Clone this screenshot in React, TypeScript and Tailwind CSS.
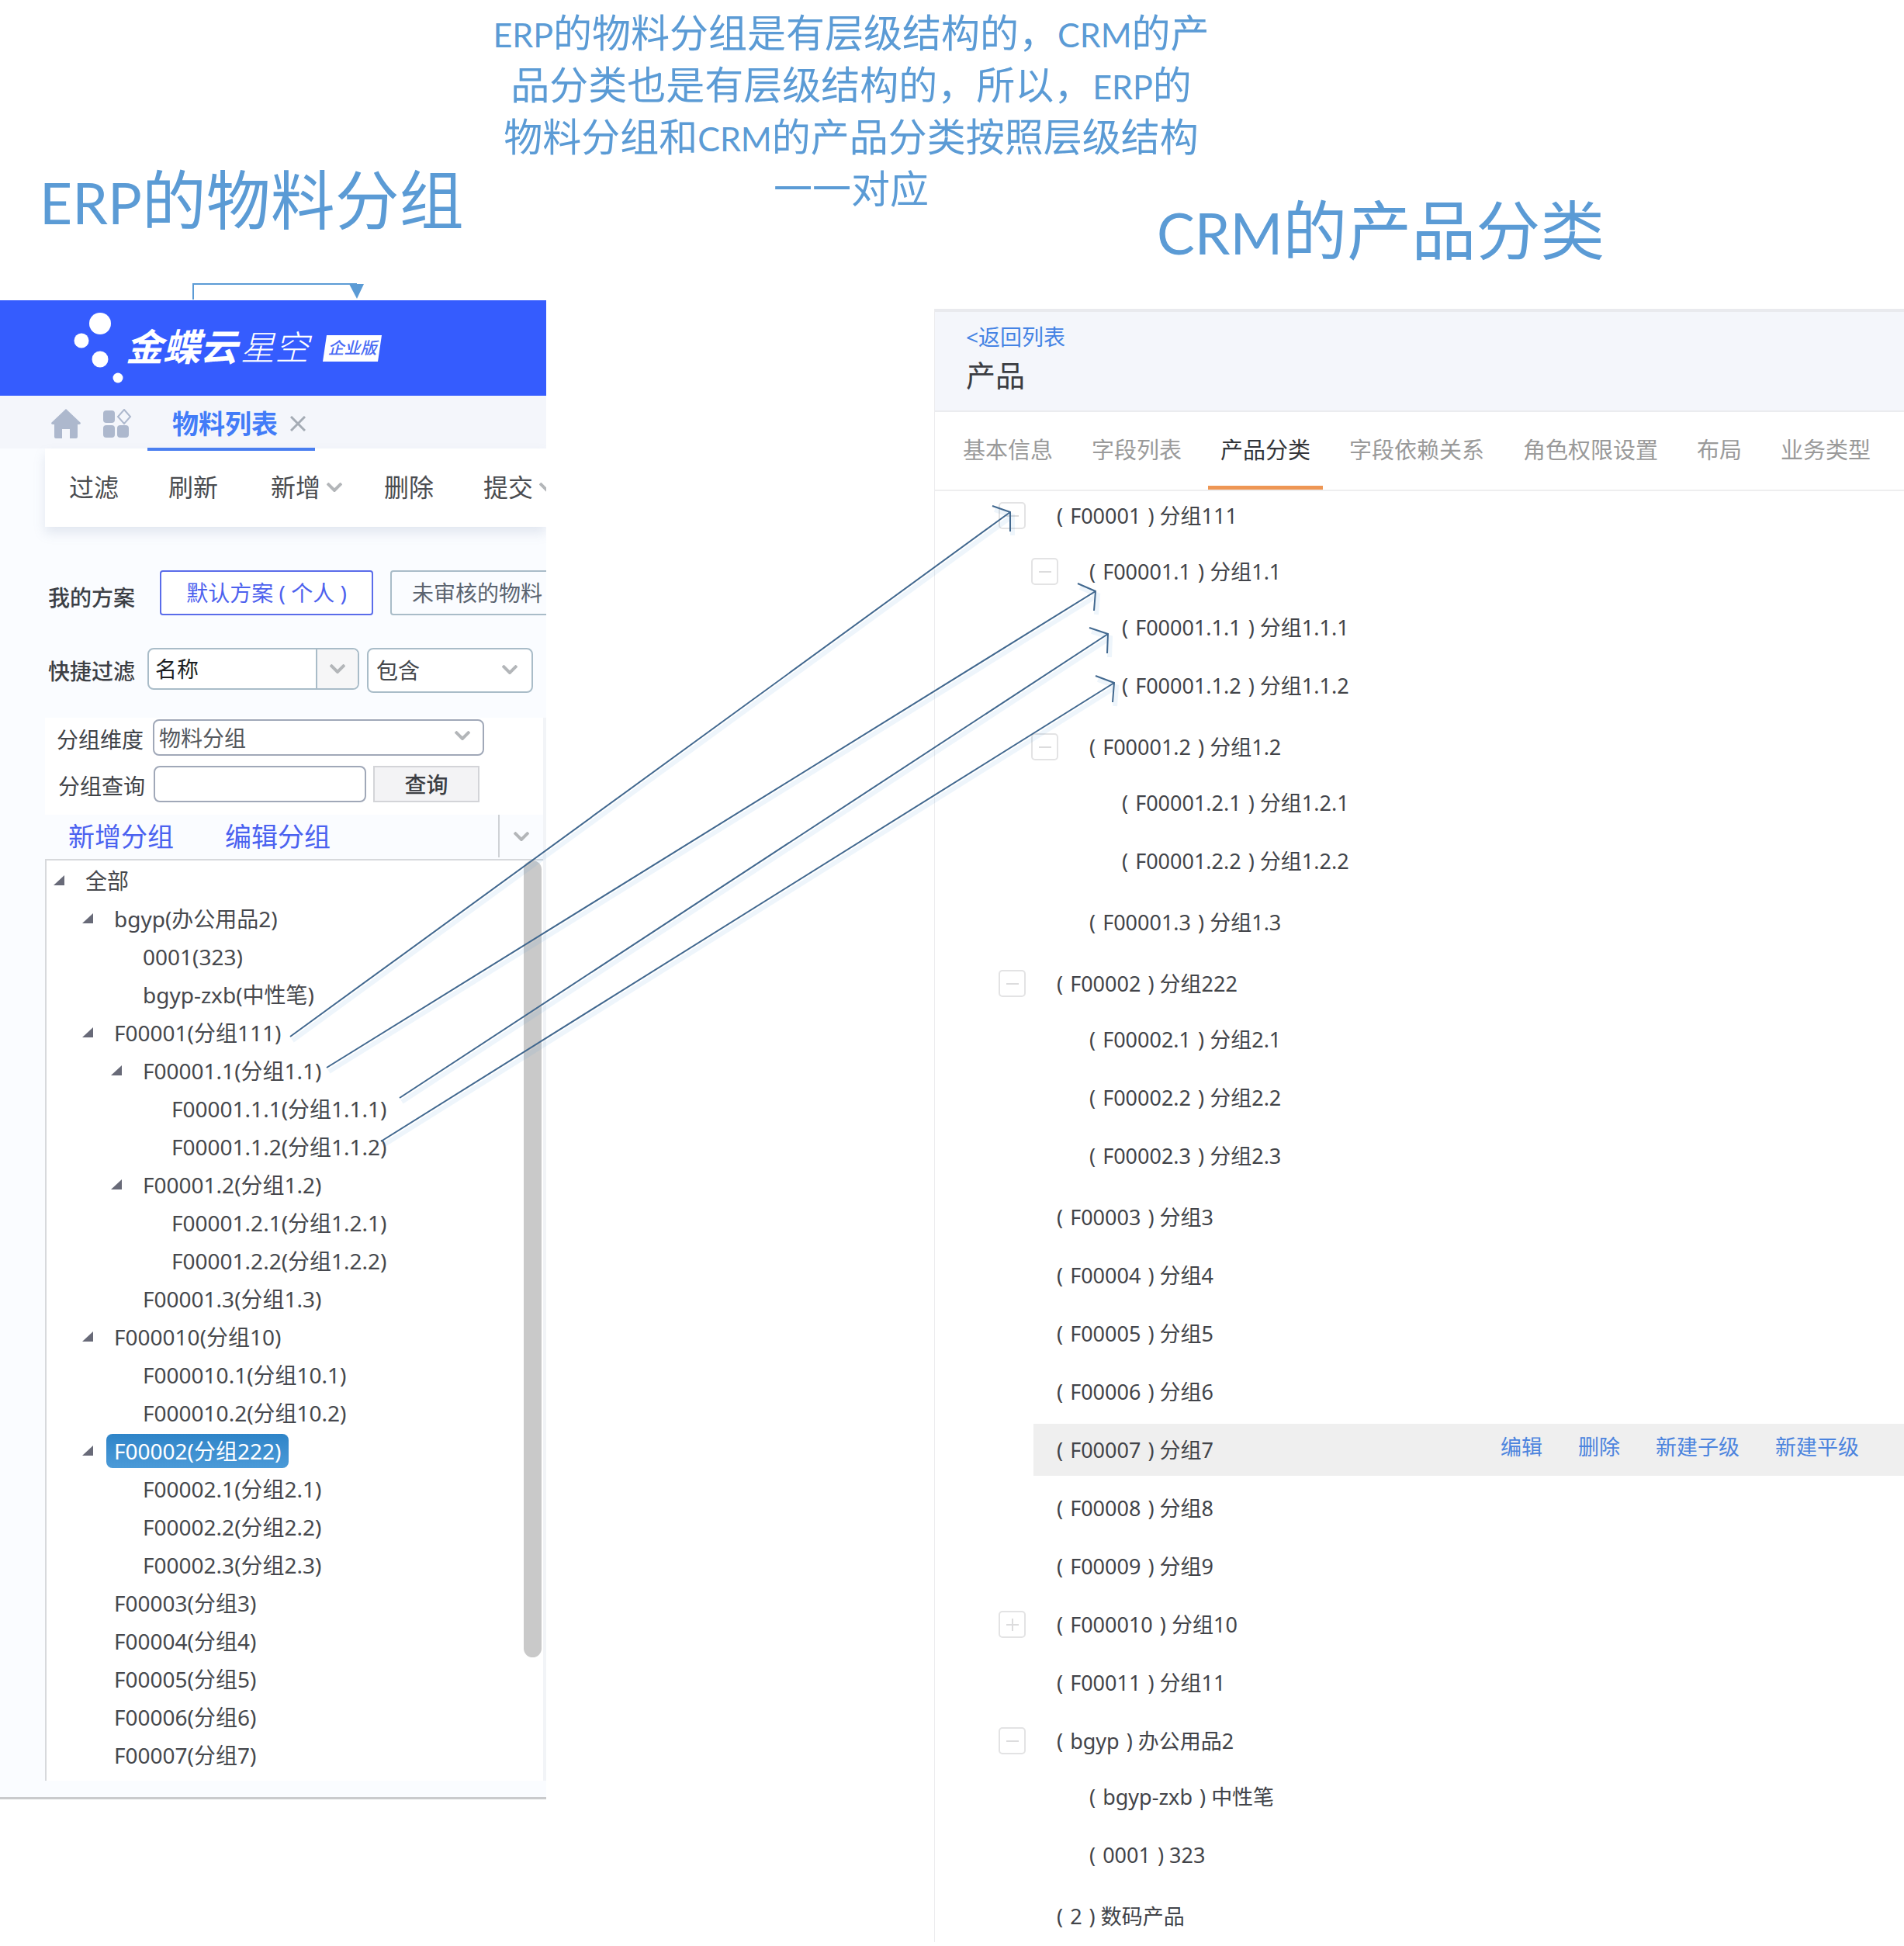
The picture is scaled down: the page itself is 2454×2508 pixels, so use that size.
import type { ReactNode } from "react";
import { clsx } from "clsx";

type ErpItem = { label: string; level: number; open?: boolean; selected?: boolean };

type CrmNode = {
  code: string;
  name: string;
  collapsed?: boolean;
  active?: boolean;
  children?: CrmNode[];
};

const erpItems: ErpItem[] = [
  { label: "全部", level: 0, open: true },
  { label: "bgyp(办公用品2)", level: 1, open: true },
  { label: "0001(323)", level: 2 },
  { label: "bgyp-zxb(中性笔)", level: 2 },
  { label: "F00001(分组111)", level: 1, open: true },
  { label: "F00001.1(分组1.1)", level: 2, open: true },
  { label: "F00001.1.1(分组1.1.1)", level: 3 },
  { label: "F00001.1.2(分组1.1.2)", level: 3 },
  { label: "F00001.2(分组1.2)", level: 2, open: true },
  { label: "F00001.2.1(分组1.2.1)", level: 3 },
  { label: "F00001.2.2(分组1.2.2)", level: 3 },
  { label: "F00001.3(分组1.3)", level: 2 },
  { label: "F000010(分组10)", level: 1, open: true },
  { label: "F000010.1(分组10.1)", level: 2 },
  { label: "F000010.2(分组10.2)", level: 2 },
  { label: "F00002(分组222)", level: 1, open: true, selected: true },
  { label: "F00002.1(分组2.1)", level: 2 },
  { label: "F00002.2(分组2.2)", level: 2 },
  { label: "F00002.3(分组2.3)", level: 2 },
  { label: "F00003(分组3)", level: 1 },
  { label: "F00004(分组4)", level: 1 },
  { label: "F00005(分组5)", level: 1 },
  { label: "F00006(分组6)", level: 1 },
  { label: "F00007(分组7)", level: 1 },
];

const crmNodes: CrmNode[] = [
  {
    code: "F00001",
    name: "分组111",
    children: [
      {
        code: "F00001.1",
        name: "分组1.1",
        children: [
          { code: "F00001.1.1", name: "分组1.1.1" },
          { code: "F00001.1.2", name: "分组1.1.2" },
        ],
      },
      {
        code: "F00001.2",
        name: "分组1.2",
        children: [
          { code: "F00001.2.1", name: "分组1.2.1" },
          { code: "F00001.2.2", name: "分组1.2.2" },
        ],
      },
      { code: "F00001.3", name: "分组1.3" },
    ],
  },
  {
    code: "F00002",
    name: "分组222",
    children: [
      { code: "F00002.1", name: "分组2.1" },
      { code: "F00002.2", name: "分组2.2" },
      { code: "F00002.3", name: "分组2.3" },
    ],
  },
  { code: "F00003", name: "分组3" },
  { code: "F00004", name: "分组4" },
  { code: "F00005", name: "分组5" },
  { code: "F00006", name: "分组6" },
  { code: "F00007", name: "分组7", active: true },
  { code: "F00008", name: "分组8" },
  { code: "F00009", name: "分组9" },
  { code: "F000010", name: "分组10", collapsed: true },
  { code: "F00011", name: "分组11" },
  {
    code: "bgyp",
    name: "办公用品2",
    children: [
      { code: "bgyp-zxb", name: "中性笔" },
      { code: "0001", name: "323" },
    ],
  },
  { code: "2", name: "数码产品" },
];

const crmTabs = [
  "基本信息",
  "字段列表",
  "产品分类",
  "字段依赖关系",
  "角色权限设置",
  "布局",
  "业务类型",
];

const levelPadding = ["pl-[9px]", "pl-[46px]", "pl-[83px]", "pl-[120px]"];

// line + open arrow head, ERP node -> CRM node
const arrows = [
  "M374 1336 L1302 660 M1279 652 L1302 660 L1302 685",
  "M421 1376 L1412 762 M1389 752 L1412 762 L1410 787",
  "M515 1415 L1428 817 M1404 809 L1428 817 L1427 842",
  "M491 1471 L1436 880 M1412 871 L1436 880 L1434 905",
];

function Chevron({ className }: { className?: string }) {
  return (
    <svg
      viewBox="0 0 20 12"
      className={clsx("h-3 w-5 shrink-0 text-[#b3b6b9]", className)}
      fill="none"
      stroke="currentColor"
      strokeWidth="4"
      aria-hidden="true"
    >
      <path d="M1 1 L10 10 L19 1" />
    </svg>
  );
}

function Latin({ children }: { children: ReactNode }) {
  return <span className="font-['Lato',sans-serif] text-[43px] leading-none">{children}</span>;
}

function LatinLg({ children }: { children: ReactNode }) {
  return <span className="font-['Lato',sans-serif] text-[73px] leading-none">{children}</span>;
}

function ErpHeader() {
  return (
    <header className="flex h-[123px] items-center bg-[#355cfe] pl-[94px] text-white">
      <svg viewBox="0 0 68 100" className="h-[100px] w-[68px]" fill="currentColor" aria-hidden="true">
        <circle cx="35" cy="18" r="14" />
        <circle cx="11" cy="40" r="9.5" />
        <circle cx="35" cy="64" r="10.5" />
        <circle cx="58" cy="88" r="6.5" />
      </svg>
      <span className="pb-1 text-[48px] leading-none font-bold italic">金蝶云</span>
      <span className="ml-1 pb-1 text-[44px] leading-none font-light italic">星空</span>
      <span className="relative ml-[18px] flex h-[34px] w-[76px] items-center justify-center">
        <svg viewBox="0 0 76 34" className="absolute inset-0 h-full w-full" aria-hidden="true">
          <path d="M5 0 H76 L71 34 H0 Z" fill="#fff" />
        </svg>
        <span className="relative text-[21px] leading-none font-medium text-[#4a6bf5] italic">
          企业版
        </span>
      </span>
    </header>
  );
}

function ErpTabs() {
  return (
    <nav className="flex h-[68px] items-stretch bg-[#f4f6fb] pl-[66px] text-[#adb8cd]">
      <a href="#home" aria-label="首页" className="flex items-center pt-1">
        <svg viewBox="0 0 38 38" className="h-[38px] w-[38px]" fill="currentColor">
          <path d="M19 0 L38 18 Q38 20 36 20 H34 V36 Q34 38 32 38 H24 V26 H14 V38 H6 Q4 38 4 36 V20 H2 Q0 20 0 18 Z" />
        </svg>
      </a>
      <a href="#apps" aria-label="应用" className="ml-[28px] flex items-center pt-1">
        <svg viewBox="0 0 38 38" className="h-[38px] w-[38px]" fill="currentColor">
          <rect x="1" y="2" width="15" height="16" rx="4" />
          <rect x="1" y="21" width="15" height="16" rx="4" />
          <rect x="19" y="21" width="15" height="16" rx="4" />
          <path d="M28 1 L36 10 L28 19 L20 10 Z" fill="none" stroke="currentColor" strokeWidth="2" />
        </svg>
      </a>
      <div className="relative ml-5 flex w-[216px] items-center pt-1 pl-8">
        <a href="#material" className="text-[34px] leading-none font-bold text-[#427cf8]">
          物料列表
        </a>
        <button type="button" aria-label="关闭" className="ml-4">
          <svg viewBox="0 0 20 20" className="h-5 w-5" fill="none" stroke="#a5acb5" strokeWidth="3">
            <path d="M1 1 L19 19 M19 1 L1 19" />
          </svg>
        </button>
        <span className="absolute inset-x-0 -bottom-[3px] z-10 h-1 bg-[#4a7ff0]" />
      </div>
    </nav>
  );
}

function ErpToolbar() {
  return (
    <div className="ml-[58px] flex h-[101px] items-center bg-white pb-[2px] pl-[31px] text-[32px] leading-none whitespace-nowrap text-[#4a4c50] shadow-[0_8px_14px_rgba(120,140,170,0.18)]">
      <button type="button">过滤</button>
      <button type="button" className="ml-16">刷新</button>
      <span className="ml-[34px] h-[30px] w-px bg-[#8f9296]" />
      <button type="button" className="ml-[34px] flex items-center gap-2">
        新增
        <Chevron />
      </button>
      <button type="button" className="ml-[54px]">删除</button>
      <button type="button" className="ml-16 flex items-center gap-2">
        提交
        <Chevron />
      </button>
    </div>
  );
}

function ErpFilters() {
  return (
    <div className="pt-14 pl-[62px] text-[28px] leading-none whitespace-nowrap">
      <div className="flex h-[58px] items-center">
        <span className="w-36 shrink-0 pt-3 font-medium text-[#3c3f45]">我的方案</span>
        <button
          type="button"
          className="h-full w-[275px] shrink-0 rounded-[4px] border-2 border-[#5a6cea] bg-white text-[#4d61ee]"
        >
          默认方案 ( 个人 )
        </button>
        <button
          type="button"
          className="ml-[22px] h-full w-[280px] shrink-0 rounded-[4px] border-2 border-[#a9bcc8] pl-[26px] text-left text-[#5b6470]"
        >
          未审核的物料
        </button>
      </div>
      <div className="mt-[42px] flex h-[58px] items-start">
        <label htmlFor="quick-field" className="w-32 pt-4 font-medium text-[#3c3f45]">
          快捷过滤
        </label>
        <div className="relative">
          <select
            id="quick-field"
            className="h-[54px] w-[273px] appearance-none rounded-lg border-2 border-[#a9bcc8] bg-white pl-2 text-[#1d1f22]"
          >
            <option>名称</option>
          </select>
          <span className="pointer-events-none absolute inset-y-[2px] right-[2px] flex w-[54px] items-center justify-center rounded-r-md border-l-2 border-[#a9bcc8] bg-[#f6f6f7]">
            <Chevron />
          </span>
        </div>
        <div className="relative ml-[10px]">
          <select
            aria-label="条件"
            className="h-[58px] w-[214px] appearance-none rounded-lg border-2 border-[#a9bcc8] bg-white pl-[10px] text-[#45484d]"
          >
            <option>包含</option>
          </select>
          <Chevron className="pointer-events-none absolute top-[22px] right-5" />
        </div>
      </div>
    </div>
  );
}

function ErpTree() {
  return (
    <div className="relative border-t-2 border-l-2 border-[#d7d9dc] bg-white pt-px pb-[9px]">
      <ul className="text-[28px] leading-none whitespace-nowrap text-[#46484d]">
        {erpItems.map((item) => (
          <li key={item.label} className={clsx("flex h-[49px] items-center", levelPadding[item.level])}>
            <span className="flex w-[31px] shrink-0">
              {item.open && (
                <svg viewBox="0 0 14 13" className="h-[13px] w-[14px]" fill="#686a78" aria-hidden="true">
                  <path d="M14 0 V13 H0 Z" />
                </svg>
              )}
            </span>
            <span
              className={clsx(
                "px-[10px] py-2",
                item.selected &&
                  "rounded-lg bg-linear-to-b from-[#2e84c8] to-[#4b9ad8] text-white",
              )}
            >
              {item.label}
            </span>
          </li>
        ))}
      </ul>
      <span className="absolute top-0 right-[2px] h-[1027px] w-[23px] rounded-full bg-[#c9c9c9]" />
    </div>
  );
}

function ErpGroups() {
  return (
    <div className="mt-8 ml-[58px] border-r-4 border-[#f2f4f7] bg-white pt-[2px] text-[28px] leading-none whitespace-nowrap text-[#404348]">
      <div className="flex h-[47px] items-center pl-[15px]">
        <label htmlFor="dimension" className="w-[124px] pt-1">
          分组维度
        </label>
        <div className="relative">
          <select
            id="dimension"
            className="h-[47px] w-[427px] appearance-none rounded-lg border-2 border-[#a0a8b8] bg-white pl-[6px] text-[#55585d]"
          >
            <option>物料分组</option>
          </select>
          <Chevron className="pointer-events-none absolute top-[15px] right-[18px]" />
        </div>
      </div>
      <div className="mt-[13px] flex h-[47px] items-center pl-[17px]">
        <label htmlFor="keyword" className="w-[123px] pt-1">
          分组查询
        </label>
        <input
          id="keyword"
          type="text"
          className="h-[47px] w-[274px] rounded-lg border-2 border-[#a0a8b8] bg-white px-2"
        />
        <button
          type="button"
          className="ml-[9px] h-[47px] w-[137px] border-2 border-[#d3d4d8] bg-[#f3f3f5] font-medium text-[#3c3e43]"
        >
          查询
        </button>
      </div>
      <div className="mt-4 flex h-[57px] items-center bg-[#fafcff] pb-[2px] pl-[30px] text-[34px] text-[#4b62f0]">
        <button type="button">新增分组</button>
        <button type="button" className="ml-[66px]">编辑分组</button>
        <button
          type="button"
          aria-label="更多"
          className="ml-auto flex h-full w-[58px] items-center justify-center border-l-2 border-[#cfd2d6]"
        >
          <Chevron />
        </button>
      </div>
      <ErpTree />
    </div>
  );
}

function CrmRow({ node }: { node: CrmNode }) {
  const hasToggle = node.collapsed || node.children;
  return (
    <li>
      <div className="flex h-[67px] items-center">
        <span className="w-[35px] shrink-0">
          {hasToggle && (
            <button
              type="button"
              aria-label={node.collapsed ? "展开" : "收起"}
              className="flex h-[35px] w-[35px] items-center justify-center rounded-[5px] border-2 border-[#e3e3e4] bg-white"
            >
              <svg viewBox="0 0 16 16" className="h-4 w-4" stroke="#dcdcdd" strokeWidth="2">
                <path d={node.collapsed ? "M0 8 H16 M8 0 V16" : "M0 8 H16"} />
              </svg>
            </button>
          )}
        </span>
        <div
          className={clsx(
            "ml-[10px] flex h-full flex-1 items-center justify-between pl-[30px]",
            node.active && "bg-[#efefef]",
          )}
        >
          <span>
            ( <span className="px-[2px]">{node.code}</span> ) {node.name}
          </span>
          {node.active && (
            <span className="flex gap-[46px] pr-[58px] pb-2 text-[#4c84de]">
              <a href="#edit">编辑</a>
              <a href="#delete">删除</a>
              <a href="#new-child">新建子级</a>
              <a href="#new-sibling">新建平级</a>
            </span>
          )}
        </div>
      </div>
      {node.children && (
        <ul className="flex flex-col gap-2 pt-[5px] pb-1 pl-[42px]">
          {node.children.map((child) => (
            <CrmRow key={child.code} node={child} />
          ))}
        </ul>
      )}
    </li>
  );
}

function CrmPanel() {
  return (
    <section className="border-l border-[#ececee]">
      <header className="h-[133px] border-t-4 border-b-2 border-t-[#e9eaee] border-b-[#ebecef] bg-[#f4f6fb] pt-[18px] pl-10 leading-none">
        <a href="#list" className="block text-[28px] text-[#4583e4]">
          &lt;返回列表
        </a>
        <h2 className="mt-4 text-[38px] text-[#3b3d42]">产品</h2>
      </header>
      <nav className="flex h-[102px] items-stretch gap-[50px] border-b-2 border-[#eeeeef] pl-9 text-[29px] leading-none whitespace-nowrap text-[#9a9a9a]">
        {crmTabs.map((tab) => (
          <a
            key={tab}
            href={`#${tab}`}
            className={clsx("relative flex items-center pb-1", tab === "产品分类" && "text-[#333539]")}
          >
            {tab}
            {tab === "产品分类" && (
              <span className="absolute -inset-x-4 bottom-0 h-[5px] bg-[#ee9654]" />
            )}
          </a>
        ))}
      </nav>
      <ul className="-mt-[2px] flex flex-col gap-2 pl-[82px] text-[27px] leading-none whitespace-nowrap text-[#424449]">
        {crmNodes.map((node) => (
          <CrmRow key={node.code} node={node} />
        ))}
      </ul>
    </section>
  );
}

export default function App() {
  return (
    <main className="relative flex min-h-screen items-start overflow-hidden bg-white font-['Noto_Sans','Noto_Sans_CJK_SC',sans-serif]">
      <div className="w-[704px] shrink-0">
        <div className="h-[387px] pt-[203px] pl-[51px]">
          <h1 className="font-['Noto_Sans_CJK_SC',sans-serif] text-[83px] leading-[100px] font-normal whitespace-nowrap text-[#5b9bd5]">
            <LatinLg>ERP</LatinLg>的物料分组
          </h1>
        </div>
        <section className="overflow-hidden bg-[#fafcff]">
          <ErpHeader />
          <ErpTabs />
          <ErpToolbar />
          <ErpFilters />
          <ErpGroups />
          <div className="mt-[21px] h-[3px] bg-[#c9cacc]" />
        </section>
      </div>

      <div className="ml-[500px] min-w-0 flex-1">
        <div className="h-[398px] pt-[242px] pl-[287px]">
          <h1 className="font-['Noto_Sans_CJK_SC',sans-serif] text-[83px] leading-[100px] font-normal whitespace-nowrap text-[#5b9bd5]">
            <LatinLg>CRM</LatinLg>的产品分类
          </h1>
        </div>
        <CrmPanel />
      </div>

      {/* annotation between the two panels */}
      <p className="absolute top-[6px] left-[617px] w-[960px] text-center font-['Noto_Sans_CJK_SC',sans-serif] text-[50px] leading-[67px] font-normal whitespace-nowrap text-[#5b9bd5]">
        <Latin>ERP</Latin>的物料分组是有层级结构的，<Latin>CRM</Latin>的产
        <br />
        品分类也是有层级结构的，所以，<Latin>ERP</Latin>的
        <br />
        物料分组和<Latin>CRM</Latin>的产品分类按照层级结构
        <br />
        一一对应
      </p>

      <svg
        viewBox="0 0 1500 1500"
        className="pointer-events-none absolute top-0 left-0 h-[1500px] w-[1500px]"
        fill="none"
        aria-hidden="true"
      >
        <path d="M249 386 V366 H460" stroke="#5b9bd5" strokeWidth="2" />
        <path d="M450 366 H469 L460 385 Z" fill="#5b9bd5" />
        {arrows.map((d) => (
          <g key={d}>
            <path d={d} stroke="#5b9bd5" strokeOpacity="0.1" strokeWidth="6" transform="translate(3 5)" />
            <path d={d} stroke="#41688f" strokeWidth="2" />
          </g>
        ))}
      </svg>
    </main>
  );
}
